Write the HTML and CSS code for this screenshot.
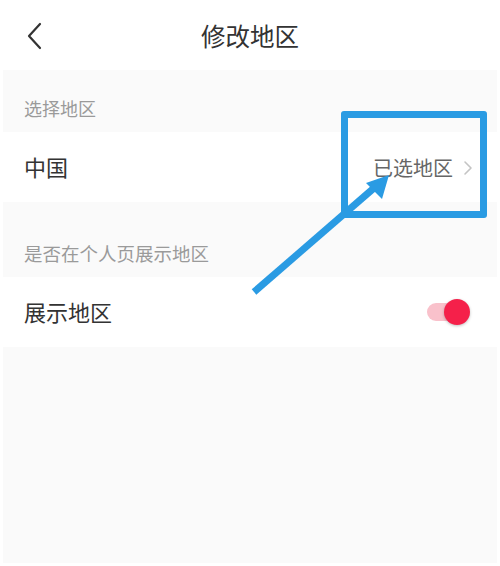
FILE: index.html
```html
<!DOCTYPE html>
<html lang="zh">
<head>
<meta charset="utf-8">
<link rel="stylesheet" href="styles.css">
</head>
<body>
<div class="page">
  <div class="header">
    <svg class="back" width="16" height="28" viewBox="0 0 16 28"><path d="M13 2 L2 14 L13 26" fill="none" stroke="#333" stroke-width="2.2" stroke-linecap="round" stroke-linejoin="round"/></svg>
    <div class="title">修改地区</div>
  </div>
  <div class="content">
    <div class="label label-first">选择地区</div>
    <div class="row">
      <span class="row-text">中国</span>
      <span class="row-right">已选地区<svg class="chev" width="10" height="16" viewBox="0 0 10 16"><path d="M2 2 L8 8 L2 14" fill="none" stroke="#c4c4c4" stroke-width="1.6" stroke-linecap="round" stroke-linejoin="round"/></svg></span>
    </div>
    <div class="label label-second">是否在个人页展示地区</div>
    <div class="row">
      <span class="row-text">展示地区</span>
      <span class="toggle"><span class="track"></span><span class="knob"></span></span>
    </div>
    <div class="fill"></div>
  </div>
  <div class="highlight"></div>
  <svg class="arrow" width="500" height="566" viewBox="0 0 500 566">
    <line x1="254" y1="292" x2="374" y2="188" stroke="#2a9be3" stroke-width="7"/>
    <polygon points="389,175 366,183 382,199" fill="#2a9be3"/>
  </svg>
</div>
</body>
</html>
```
FILE: styles.css
```css
html, body {
  margin: 0;
  padding: 0;
  background: #fff;
}
body {
  font-family: "Noto Sans CJK SC", "Noto Sans", sans-serif;
}
.page {
  position: relative;
  width: 500px;
  height: 566px;
  box-sizing: border-box;
  padding: 0 3px 3px 3px;
  display: flex;
  flex-direction: column;
  overflow: hidden;
}
.header {
  height: 70px;
  flex: none;
  display: flex;
  align-items: center;
  position: relative;
}
.back {
  position: absolute;
  left: 24px;
  top: 22px;
}
.title {
  flex: 1;
  text-align: center;
  font-size: 24.5px;
  color: #333;
  line-height: 30px;
  margin-top: 1px;
}
.content {
  flex: 1;
  background: #fafafa;
  display: flex;
  flex-direction: column;
}
.label {
  display: flex;
  align-items: flex-end;
  padding-left: 21px;
  font-size: 18px;
  line-height: 24px;
  color: #9a9a9a;
  box-sizing: border-box;
  padding-bottom: 12px;
}
.label-first {
  height: 62px;
}
.label-second {
  height: 75px;
  font-size: 18.5px;
}
.row {
  height: 70px;
  background: #fff;
  display: flex;
  align-items: center;
  justify-content: space-between;
  padding: 0 24px 0 21px;
}
.row-text {
  font-size: 22px;
  color: #333;
  margin-top: -2px;
}
.row-right {
  display: flex;
  align-items: center;
  gap: 10px;
  font-size: 20px;
  color: #666;
}
.chev {
  margin-top: 1px;
}
.toggle {
  position: relative;
  width: 43px;
  height: 26px;
  margin-right: 3px;
}
.track {
  position: absolute;
  left: 0;
  top: 4px;
  width: 32px;
  height: 18px;
  border-radius: 9px;
  background: #f9c1cb;
}
.knob {
  position: absolute;
  right: 0;
  top: 0;
  width: 26px;
  height: 26px;
  border-radius: 50%;
  background: #f5204a;
  box-shadow: 0 1px 3px rgba(0,0,0,0.25);
}
.fill {
  flex: 1;
}
.highlight {
  position: absolute;
  left: 341px;
  top: 111px;
  width: 146px;
  height: 107px;
  box-sizing: border-box;
  border: 7px solid #2a9be3;
  border-radius: 3px;
}
.arrow {
  position: absolute;
  left: 0;
  top: 0;
}
```
